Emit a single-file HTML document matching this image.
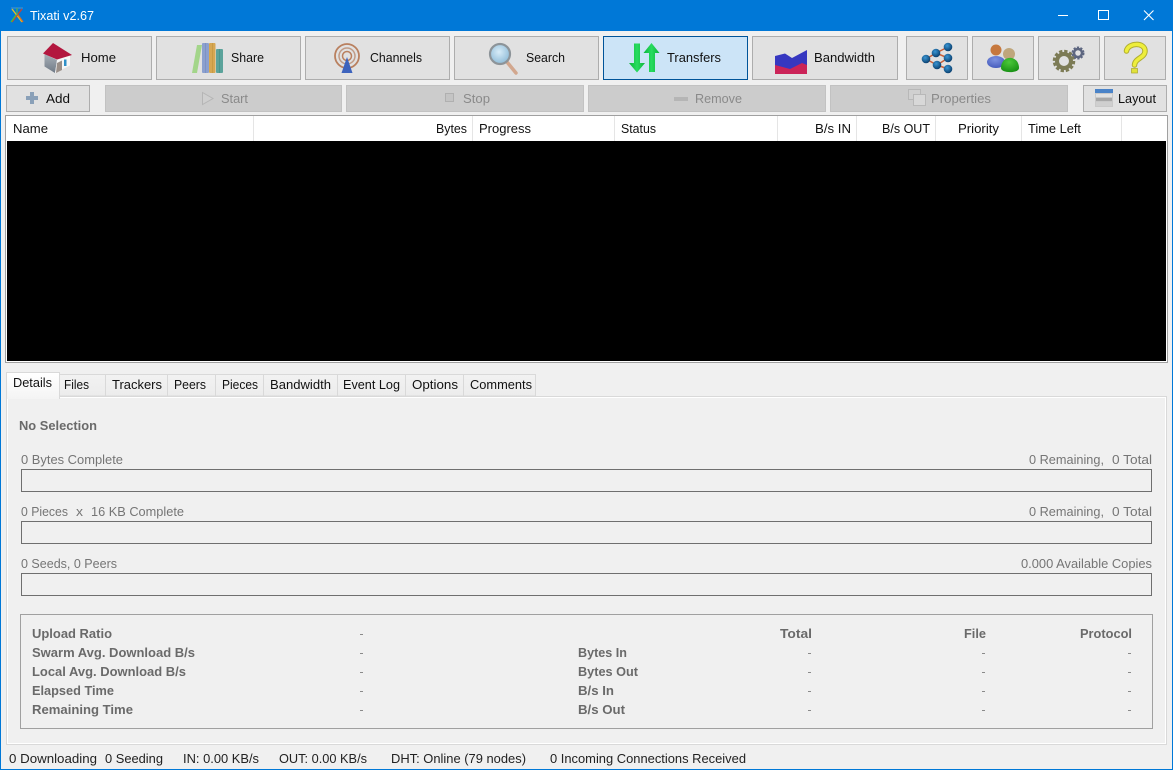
<!DOCTYPE html>
<html lang="en"><head><meta charset="utf-8"><title>Tixati v2.67</title>
<style>
html,body{margin:0;padding:0;background:#f0f0f0;width:1173px;height:770px;overflow:hidden}
svg{display:block}
text{font-family:"Liberation Sans",sans-serif;font-size:13px;fill:#111;white-space:pre}
.r rect,rect.c{shape-rendering:crispEdges}
.b{fill:#e1e1e1;stroke:#adadad}
.d{fill:#cccccc;stroke:#c2c2c2}
.dis{fill:#8a8a8a}
.g{fill:#757575}
.h{font-weight:bold;fill:#6a6a6a}
.bar{fill:none;stroke:#6f6f6f}
.s{fill:#222}
.dash{fill:#8a8a8a;shape-rendering:crispEdges}
</style></head><body>
<svg width="1173" height="770" viewBox="0 0 1173 770" xmlns="http://www.w3.org/2000/svg">
<defs>
<linearGradient id="gr" x1="0" x2="1" y1="0" y2="0"><stop offset="0" stop-color="#0cb53a"/><stop offset=".5" stop-color="#28dc60"/><stop offset="1" stop-color="#0cb53a"/></linearGradient>
<radialGradient id="ball" cx=".4" cy=".35" r=".7"><stop offset="0" stop-color="#3a96d4"/><stop offset="1" stop-color="#073a68"/></radialGradient>
<radialGradient id="lens" cx=".45" cy=".4" r=".6"><stop offset="0" stop-color="#d8ecf8"/><stop offset="1" stop-color="#8fbcd8"/></radialGradient>
<linearGradient id="tab" x1="0" x2="0" y1="0" y2="1"><stop offset="0" stop-color="#fff"/><stop offset="1" stop-color="#f4f4f4"/></linearGradient>
<linearGradient id="tab2" x1="0" x2="0" y1="0" y2="1"><stop offset="0" stop-color="#f2f2f2"/><stop offset="1" stop-color="#ececec"/></linearGradient>
<linearGradient id="wall" x1="0" x2="0" y1="0" y2="1"><stop offset="0" stop-color="#a8b0b8"/><stop offset="1" stop-color="#6f7a86"/></linearGradient>
<radialGradient id="pb" cx=".45" cy=".3" r=".8"><stop offset="0" stop-color="#7d92e0"/><stop offset="1" stop-color="#3f55b8"/></radialGradient>
<radialGradient id="pg" cx=".45" cy=".3" r=".8"><stop offset="0" stop-color="#4cc83a"/><stop offset="1" stop-color="#128a10"/></radialGradient>
</defs>

<rect class="c" x="0" y="0" width="1173" height="770" fill="#f0f0f0"/>
<!-- title bar + window border -->
<rect class="c" x="0" y="0" width="1173" height="31" fill="#0078d7"/>
<rect class="c" x="0" y="0" width="1" height="770" fill="#0078d7"/>
<rect class="c" x="1172" y="0" width="1" height="770" fill="#0078d7"/>
<rect class="c" x="0" y="769" width="1173" height="1" fill="#0078d7"/>
<g fill="none" stroke-width="1.3">
<path d="M11 8H23" stroke="#3a8fd0"/>
<path d="M12 9L22 22" stroke="#e8c020"/>
<path d="M22 9L12 22" stroke="#d04030"/>
<path d="M17 8V15" stroke="#50b050"/>
<path d="M11 22L16 15" stroke="#40c040"/>
<path d="M23 22L18 15" stroke="#e07020"/>
</g>
<text x="30" y="20" textLength="64" lengthAdjust="spacingAndGlyphs" style="fill:#fff">Tixati v2.67</text>
<rect class="c" x="1058" y="15" width="10" height="1" fill="#fff"/>
<rect x="1098.500" y="10.500" width="10" height="9" fill="none" stroke="#fff" class="c"/>
<path d="M1144 10.500L1153.500 20M1153.500 10.500L1144 20" stroke="#fff" stroke-width="1.1" fill="none"/>

<!-- main toolbar -->
<g class="r">
<rect class="b" x="7.500" y="36.500" width="144" height="43"/>
<rect class="b" x="156.500" y="36.500" width="144" height="43"/>
<rect class="b" x="305.500" y="36.500" width="144" height="43"/>
<rect class="b" x="454.500" y="36.500" width="144" height="43"/>
<rect x="603.500" y="36.500" width="144" height="43" fill="#cce4f7" stroke="#005499"/>
<rect class="b" x="752.500" y="36.500" width="145" height="43"/>
<rect class="b" x="906.500" y="36.500" width="61" height="43"/>
<rect class="b" x="972.500" y="36.500" width="61" height="43"/>
<rect class="b" x="1038.500" y="36.500" width="61" height="43"/>
<rect class="b" x="1104.500" y="36.500" width="61" height="43"/>
</g>
<text x="81" y="62" textLength="35" lengthAdjust="spacingAndGlyphs">Home</text>
<text x="231" y="62" textLength="33" lengthAdjust="spacingAndGlyphs">Share</text>
<text x="370" y="62" textLength="52" lengthAdjust="spacingAndGlyphs">Channels</text>
<text x="526" y="62" textLength="39" lengthAdjust="spacingAndGlyphs">Search</text>
<text x="667" y="62" textLength="54" lengthAdjust="spacingAndGlyphs">Transfers</text>
<text x="814" y="62" textLength="61" lengthAdjust="spacingAndGlyphs">Bandwidth</text>

<!-- home icon -->
<path d="M44.500 54L57 60L55 73L44.500 66.500Z" fill="url(#wall)"/>
<path d="M57 60L70 55V65.500L55 73Z" fill="#f6f6f6"/>
<path d="M53 43L43 53.500L57 59.500L72 55Z" fill="#b3173f"/>
<path d="M57 63L62 60.500V70L56 73Z" fill="#9a8f88"/>
<rect x="64" y="59.500" width="2.500" height="6.500" fill="#2f90c8"/>

<!-- books icon -->
<path d="M197 45H202L197 73H192Z" fill="#a3d58a"/>
<rect x="202" y="43" width="7" height="30" rx="1" fill="#8ba0cf"/>
<rect x="205" y="43" width="1" height="30" fill="#7c92c4"/>
<rect x="209" y="43" width="6.500" height="30" rx="1" fill="#d6a752"/>
<rect x="212" y="43" width="1" height="30" fill="#c89a45"/>
<rect x="216" y="49" width="7" height="24" rx="1" fill="#5ba39b"/>
<rect x="219" y="49" width="1" height="24" fill="#4a958d"/>

<!-- channels icon -->
<g fill="none">
<circle cx="347" cy="56" r="12" stroke-width="1.800" stroke="#b9805f"/>
<circle cx="347" cy="56" r="8" stroke-width="1.500" stroke="#c09a85"/>
<circle cx="347" cy="56" r="4.500" stroke-width="1.500" stroke="#b9805f"/>
</g>
<path d="M347 57L352.500 73H341.500Z" fill="#3d63bd"/>

<!-- search icon -->
<path d="M507 62L516 73" stroke="#d2a78e" stroke-width="3.500" stroke-linecap="round"/>
<circle cx="500" cy="54" r="10" fill="url(#lens)" stroke="#8d9499" stroke-width="2.200"/>

<!-- transfers icon -->
<path d="M634 43.500H640V63H645L637 72.500L629 63H634Z" fill="url(#gr)"/>
<path d="M649 72V53H643.500L651.500 43L659.500 53H655V72Z" fill="url(#gr)"/>

<!-- bandwidth icon -->
<path d="M775 56L785 53.500L792 58L807 50V70H775Z" fill="#3637c0"/>
<path d="M775 65L790 69L802 63L807 65V74H775Z" fill="#cb2458"/>

<!-- network icon -->
<g stroke="#c8603a" stroke-width="1.500" fill="none">
<path d="M926 59L936 53L948 47M936 53L948 58L937 65L926 59M937 65L948 69"/>
</g>
<g fill="url(#ball)">
<circle cx="926" cy="59" r="4.300"/><circle cx="936" cy="53" r="4.300"/><circle cx="948" cy="47" r="4.300"/>
<circle cx="948" cy="58" r="4.300"/><circle cx="937" cy="65" r="4.300"/><circle cx="948" cy="69" r="4.300"/>
</g>

<!-- people icon -->
<ellipse cx="996" cy="62" rx="9" ry="6" fill="url(#pb)"/>
<circle cx="996" cy="50" r="5.500" fill="#c6783e"/>
<circle cx="1009" cy="54" r="6" fill="#bfa67c"/>
<path d="M1001 68C1001 54.500 1019 54.500 1019 68C1019 73.500 1001 73.500 1001 68Z" fill="url(#pg)"/>

<!-- gears icon -->
<circle cx="1064" cy="61" r="9" fill="none" stroke="#7c7b55" stroke-width="4.500" stroke-dasharray="3 1.700"/>
<circle cx="1064" cy="61" r="7" fill="none" stroke="#7c7b55" stroke-width="4"/>
<circle cx="1078" cy="53" r="5" fill="none" stroke="#5d6680" stroke-width="3" stroke-dasharray="2 1.200"/>
<circle cx="1078" cy="53" r="4" fill="none" stroke="#5d6680" stroke-width="2.500"/>

<!-- question icon -->
<g fill="none" stroke-linecap="round" stroke-linejoin="round">
<path d="M1126.500 51C1128 42.500 1145 42 1145 51C1145 58 1135 58 1134.500 65" stroke="#b0ae30" stroke-width="5.500"/>
<path d="M1126.500 51C1128 42.500 1145 42 1145 51C1145 58 1135 58 1134.500 65" stroke="#eeee3c" stroke-width="3.500"/>
</g>
<rect x="1131.500" y="68.500" width="6" height="4.500" fill="#e2e23a" stroke="#a9a72c" stroke-width=".7"/>

<!-- second toolbar -->
<g class="r">
<rect class="b" x="6.500" y="85.500" width="83" height="26"/>
<rect class="d" x="105.500" y="85.500" width="236" height="26"/>
<rect class="d" x="346.500" y="85.500" width="237" height="26"/>
<rect class="d" x="588.500" y="85.500" width="237" height="26"/>
<rect class="d" x="830.500" y="85.500" width="237" height="26"/>
<rect class="b" x="1083.500" y="85.500" width="83" height="26"/>
</g>
<path d="M30 92h4v4h4v4h-4v4h-4v-4h-4v-4h4Z" fill="#8aa0b8"/>
<text x="46" y="103" textLength="24" lengthAdjust="spacingAndGlyphs">Add</text>
<path d="M202.500 92.500L213 98.500L202.500 104.500Z" fill="#cfcfcf" stroke="#b5b5b5"/>
<text class="dis" x="221" y="103" textLength="27" lengthAdjust="spacingAndGlyphs">Start</text>
<rect class="c" x="445.500" y="93.500" width="8" height="8" fill="#c4c4c4" stroke="#b0b0b0"/>
<text class="dis" x="463" y="103" textLength="27" lengthAdjust="spacingAndGlyphs">Stop</text>
<rect class="c" x="674" y="97" width="14" height="4" fill="#b5b5b5"/>
<text class="dis" x="695" y="103" textLength="47" lengthAdjust="spacingAndGlyphs">Remove</text>
<rect class="c" x="908.500" y="89.500" width="12" height="10" fill="#d0d0d0" stroke="#b8b8b8"/>
<rect class="c" x="913.500" y="94.500" width="12" height="11" fill="#d8d8d8" stroke="#b8b8b8"/>
<text class="dis" x="931" y="103" textLength="60" lengthAdjust="spacingAndGlyphs">Properties</text>
<rect class="c" x="1095" y="89" width="18" height="18" fill="#c9c9c9"/>
<rect class="c" x="1095" y="89" width="18" height="4" fill="#4a83c8"/>
<rect class="c" x="1096" y="94" width="16" height="3" fill="#e2e2e2"/>
<rect class="c" x="1096" y="98" width="16" height="3" fill="#a8a8a8"/>
<rect class="c" x="1096" y="102" width="16" height="4" fill="#cfcfcf"/>
<text x="1118" y="103" textLength="38" lengthAdjust="spacingAndGlyphs">Layout</text>

<!-- transfers list -->
<rect class="c" x="5" y="115" width="1163" height="248" fill="#a0a0a0"/>
<rect class="c" x="6" y="116" width="1161" height="246" fill="#fff"/>
<rect class="c" x="7" y="141" width="1159" height="220" fill="#000"/>
<g class="r" fill="#e5e5e5">
<rect x="253" y="116" width="1" height="25"/><rect x="472" y="116" width="1" height="25"/>
<rect x="614" y="116" width="1" height="25"/><rect x="777" y="116" width="1" height="25"/>
<rect x="856" y="116" width="1" height="25"/><rect x="935" y="116" width="1" height="25"/>
<rect x="1021" y="116" width="1" height="25"/><rect x="1121" y="116" width="1" height="25"/>
</g>
<text x="13" y="133" textLength="35" lengthAdjust="spacingAndGlyphs">Name</text>
<text x="436" y="133" textLength="31" lengthAdjust="spacingAndGlyphs">Bytes</text>
<text x="479" y="133" textLength="52" lengthAdjust="spacingAndGlyphs">Progress</text>
<text x="621" y="133" textLength="35" lengthAdjust="spacingAndGlyphs">Status</text>
<text x="815" y="133" textLength="36" lengthAdjust="spacingAndGlyphs">B/s IN</text>
<text x="882" y="133" textLength="48" lengthAdjust="spacingAndGlyphs">B/s OUT</text>
<text x="958" y="133" textLength="41" lengthAdjust="spacingAndGlyphs">Priority</text>
<text x="1028" y="133" textLength="53" lengthAdjust="spacingAndGlyphs">Time Left</text>

<!-- tab panel -->
<rect class="c" x="6" y="396" width="1161" height="349" fill="#d9d9d9"/>
<rect class="c" x="7" y="397" width="1159" height="347" fill="#fff"/>
<rect class="c" x="8" y="398" width="1157" height="345" fill="#f0f0f0"/>
<g class="r">
<rect x="59.500" y="374.500" width="476" height="21.500" fill="url(#tab2)" stroke="#d9d9d9"/>
<rect x="105" y="375" width="1" height="21" fill="#d9d9d9"/><rect x="167" y="375" width="1" height="21" fill="#d9d9d9"/>
<rect x="215" y="375" width="1" height="21" fill="#d9d9d9"/><rect x="263" y="375" width="1" height="21" fill="#d9d9d9"/>
<rect x="337" y="375" width="1" height="21" fill="#d9d9d9"/><rect x="405" y="375" width="1" height="21" fill="#d9d9d9"/>
<rect x="463" y="375" width="1" height="21" fill="#d9d9d9"/>
<rect x="6" y="372" width="54" height="27" fill="#d9d9d9"/>
<rect x="7" y="373" width="52" height="26" fill="url(#tab)"/>
</g>
<text x="13" y="387" textLength="39" lengthAdjust="spacingAndGlyphs">Details</text>
<text x="64" y="389" textLength="25" lengthAdjust="spacingAndGlyphs">Files</text>
<text x="112" y="389" textLength="50" lengthAdjust="spacingAndGlyphs">Trackers</text>
<text x="174" y="389" textLength="32" lengthAdjust="spacingAndGlyphs">Peers</text>
<text x="222" y="389" textLength="36" lengthAdjust="spacingAndGlyphs">Pieces</text>
<text x="270" y="389" textLength="61" lengthAdjust="spacingAndGlyphs">Bandwidth</text>
<text x="343" y="389" textLength="57" lengthAdjust="spacingAndGlyphs">Event Log</text>
<text x="412" y="389" textLength="46" lengthAdjust="spacingAndGlyphs">Options</text>
<text x="470" y="389" textLength="62" lengthAdjust="spacingAndGlyphs">Comments</text>

<text class="h" x="19" y="430" textLength="78" lengthAdjust="spacingAndGlyphs">No Selection</text>

<text class="g" x="21" y="464" textLength="102" lengthAdjust="spacingAndGlyphs">0 Bytes Complete</text>
<text class="g" x="1029" y="464" textLength="75" lengthAdjust="spacingAndGlyphs">0 Remaining,</text>
<text class="g" x="1112" y="464" textLength="40" lengthAdjust="spacingAndGlyphs">0 Total</text>
<rect class="bar c" x="21.500" y="469.500" width="1130" height="22"/>

<text class="g" x="21" y="516" textLength="47" lengthAdjust="spacingAndGlyphs">0 Pieces</text>
<text class="g" x="76" y="516" textLength="7" lengthAdjust="spacingAndGlyphs">x</text>
<text class="g" x="91" y="516" textLength="93" lengthAdjust="spacingAndGlyphs">16 KB Complete</text>
<text class="g" x="1029" y="516" textLength="75" lengthAdjust="spacingAndGlyphs">0 Remaining,</text>
<text class="g" x="1112" y="516" textLength="40" lengthAdjust="spacingAndGlyphs">0 Total</text>
<rect class="bar c" x="21.500" y="521.500" width="1130" height="22"/>

<text class="g" x="21" y="568" textLength="96" lengthAdjust="spacingAndGlyphs">0 Seeds, 0 Peers</text>
<text class="g" x="1021" y="568" textLength="131" lengthAdjust="spacingAndGlyphs">0.000 Available Copies</text>
<rect class="bar c" x="21.500" y="573.500" width="1130" height="22"/>

<!-- stats -->
<rect class="c" x="20.500" y="614.500" width="1132" height="114" fill="none" stroke="#a0a0a0"/>
<text class="h" x="32" y="638" textLength="80" lengthAdjust="spacingAndGlyphs">Upload Ratio</text>
<text class="h" x="32" y="657" textLength="163" lengthAdjust="spacingAndGlyphs">Swarm Avg. Download B/s</text>
<text class="h" x="32" y="676" textLength="154" lengthAdjust="spacingAndGlyphs">Local Avg. Download B/s</text>
<text class="h" x="32" y="695" textLength="82" lengthAdjust="spacingAndGlyphs">Elapsed Time</text>
<text class="h" x="32" y="714" textLength="101" lengthAdjust="spacingAndGlyphs">Remaining Time</text>
<text class="h" x="578" y="657" textLength="49" lengthAdjust="spacingAndGlyphs">Bytes In</text>
<text class="h" x="578" y="676" textLength="60" lengthAdjust="spacingAndGlyphs">Bytes Out</text>
<text class="h" x="578" y="695" textLength="36" lengthAdjust="spacingAndGlyphs">B/s In</text>
<text class="h" x="578" y="714" textLength="47" lengthAdjust="spacingAndGlyphs">B/s Out</text>
<text class="h" x="780" y="638" textLength="32" lengthAdjust="spacingAndGlyphs">Total</text>
<text class="h" x="964" y="638" textLength="22" lengthAdjust="spacingAndGlyphs">File</text>
<text class="h" x="1080" y="638" textLength="52" lengthAdjust="spacingAndGlyphs">Protocol</text>
<g class="dash">
<rect x="360" y="634" width="3" height="1"/><rect x="360" y="653" width="3" height="1"/><rect x="360" y="672" width="3" height="1"/><rect x="360" y="691" width="3" height="1"/><rect x="360" y="710" width="3" height="1"/>
<rect x="808" y="653" width="3" height="1"/><rect x="808" y="672" width="3" height="1"/><rect x="808" y="691" width="3" height="1"/><rect x="808" y="710" width="3" height="1"/>
<rect x="982" y="653" width="3" height="1"/><rect x="982" y="672" width="3" height="1"/><rect x="982" y="691" width="3" height="1"/><rect x="982" y="710" width="3" height="1"/>
<rect x="1128" y="653" width="3" height="1"/><rect x="1128" y="672" width="3" height="1"/><rect x="1128" y="691" width="3" height="1"/><rect x="1128" y="710" width="3" height="1"/>
</g>

<!-- status bar -->
<text class="s" x="9" y="763" textLength="88" lengthAdjust="spacingAndGlyphs">0 Downloading</text>
<text class="s" x="105" y="763" textLength="58" lengthAdjust="spacingAndGlyphs">0 Seeding</text>
<text class="s" x="183" y="763" textLength="76" lengthAdjust="spacingAndGlyphs">IN: 0.00 KB/s</text>
<text class="s" x="279" y="763" textLength="88" lengthAdjust="spacingAndGlyphs">OUT: 0.00 KB/s</text>
<text class="s" x="391" y="763" textLength="135" lengthAdjust="spacingAndGlyphs">DHT: Online (79 nodes)</text>
<text class="s" x="550" y="763" textLength="196" lengthAdjust="spacingAndGlyphs">0 Incoming Connections Received</text>
</svg>
</body></html>
